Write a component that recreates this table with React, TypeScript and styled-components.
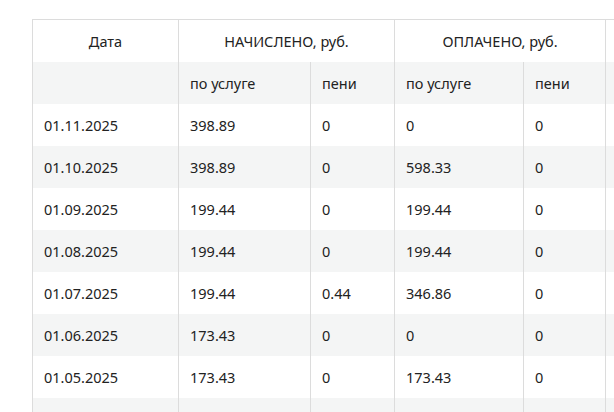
import React from 'react';
import styled, { createGlobalStyle } from 'styled-components';

const GlobalStyle = createGlobalStyle`
  html, body {
    margin: 0;
    padding: 0;
    background: #ffffff;
  }
  body {
    font-family: "Noto Sans", "Open Sans", sans-serif;
    color: #222222;
  }
`;

const Page = styled.div`
  width: 614px;
  height: 412px;
  overflow: hidden;
  padding: 19px 0 0 32px;
  box-sizing: border-box;
`;

const Table = styled.table`
  border-collapse: collapse;
  table-layout: fixed;
  width: 700px;
  font-size: 14.5px;
  border-top: 1px solid #dcdcdc;
  border-left: 1px solid #dcdcdc;
`;

const Row = styled.tr<{ $shade?: boolean }>`
  height: 42px;
  background: ${(p) => (p.$shade ? '#f4f5f5' : '#ffffff')};
`;

const HeadCell = styled.th`
  font-weight: normal;
  text-align: center;
  padding: 0 11px;
  border-right: 1px solid #dcdcdc;
  white-space: nowrap;
`;

const Cell = styled.td`
  text-align: left;
  padding: 0 11px;
  border-right: 1px solid #dcdcdc;
  white-space: nowrap;
`;

const rows = [
  ['01.11.2025', '398.89', '0', '0', '0'],
  ['01.10.2025', '398.89', '0', '598.33', '0'],
  ['01.09.2025', '199.44', '0', '199.44', '0'],
  ['01.08.2025', '199.44', '0', '199.44', '0'],
  ['01.07.2025', '199.44', '0.44', '346.86', '0'],
  ['01.06.2025', '173.43', '0', '0', '0'],
  ['01.05.2025', '173.43', '0', '173.43', '0'],
];

const App = () => {
  return (
    <Page>
      <GlobalStyle />
      <Table>
        <colgroup>
          <col style={{ width: 146 }} />
          <col style={{ width: 132 }} />
          <col style={{ width: 84 }} />
          <col style={{ width: 129 }} />
          <col style={{ width: 82 }} />
          <col style={{ width: 127 }} />
        </colgroup>
        <thead>
          <Row>
            <HeadCell>Дата</HeadCell>
            <HeadCell colSpan={2}>НАЧИСЛЕНО, руб.</HeadCell>
            <HeadCell colSpan={2}>ОПЛАЧЕНО, руб.</HeadCell>
            <HeadCell />
          </Row>
          <Row $shade>
            <Cell />
            <Cell>по услуге</Cell>
            <Cell>пени</Cell>
            <Cell>по услуге</Cell>
            <Cell>пени</Cell>
            <Cell />
          </Row>
        </thead>
        <tbody>
          {rows.map((r, i) => (
            <Row key={r[0]} $shade={i % 2 === 1}>
              {r.map((v, j) => (
                <Cell key={j}>{v}</Cell>
              ))}
              <Cell />
            </Row>
          ))}
          <Row $shade>
            <Cell />
            <Cell />
            <Cell />
            <Cell />
            <Cell />
            <Cell />
          </Row>
        </tbody>
      </Table>
    </Page>
  );
};

export default App;
